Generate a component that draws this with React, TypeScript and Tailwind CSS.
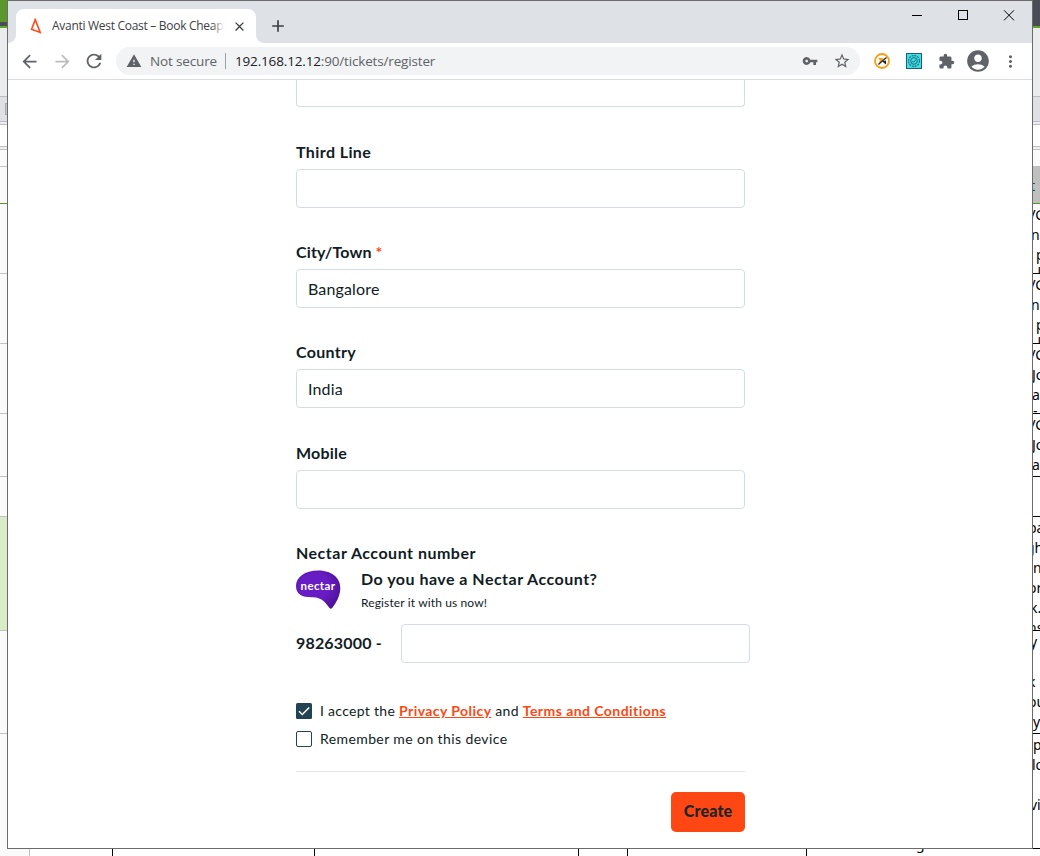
import React from "react";
import {
  MdAccountCircle,
  MdAdd,
  MdArrowBack,
  MdArrowForward,
  MdClose,
  MdExtension,
  MdMoreVert,
  MdRefresh,
  MdStarBorder,
  MdVpnKey,
  MdWarning,
} from "react-icons/md";

function LeftEdge() {
  return (
    <div className="flex w-[7px] shrink-0 flex-col overflow-hidden bg-[#fafafa]">
      <div className="h-[22px] bg-[#5b982b]" />
      <div className="h-1 bg-[#4a4d57]" />
      <div className="h-0.5 bg-[#5fa82c]" />
      <div className="h-[68px] bg-[#ebecee]" />
      <div className="flex h-[26px] items-center justify-end border-y border-[#bcbcc4] bg-[#dfe0e6]">
        <div className="h-3 w-0.5 border-y border-l border-[#a9a9ad] bg-[#c8c8cc]" />
      </div>
      <div className="h-0.5 bg-[#ececf0]" />
      <div className="h-[23px] border-y border-[#c0c0c4] bg-white" />
      <div className="h-0.5 bg-[#eeeeee]" />
      <div className="h-[18px] border-y border-[#c3c3c3]" />
      <div className="h-9" />
      <div className="h-px bg-[#5b982b]" />
      <div className="h-[70px] border-b border-[#c3c3c3]" />
      <div className="h-[70px] border-b border-[#c3c3c3]" />
      <div className="h-[70px] border-b border-[#c3c3c3]" />
      <div className="h-[63px] border-b border-[#c3c3c3]" />
      <div className="h-10 border-b border-[#c3c3c3]" />
      <div className="h-[114px] border-b border-[#c3c3c3] bg-[#d8edc6]" />
      <div className="h-[103px] border-b border-[#c3c3c3]" />
    </div>
  );
}

function Cell({ size, lines }: { size: string; lines: [string, string][] }) {
  return (
    <div className={`${size} overflow-hidden border-b border-black pt-px`}>
      {lines.map(([text, place], i) => (
        <div key={i} className={`h-5 leading-5 ${place}`}>
          {text}
        </div>
      ))}
    </div>
  );
}

function RightEdge() {
  return (
    <div className="flex w-[7px] shrink-0 flex-col overflow-hidden whitespace-nowrap bg-white font-['Noto_Sans',sans-serif] text-[14px] text-black">
      <div className="h-[26px] shrink-0 bg-[#4a4d57]" />
      <div className="h-0.5 shrink-0 bg-[#5fa82c]" />
      <div className="h-[68px] shrink-0 bg-[#ebecee]" />
      <div className="h-[26px] shrink-0 border-y border-[#bcbcc4] bg-[#dfe0e6]" />
      <div className="h-0.5 shrink-0 bg-[#ececf0]" />
      <div className="h-[23px] shrink-0 border-y border-[#c0c0c4]" />
      <div className="h-0.5 shrink-0 bg-[#eeeeee]" />
      <div className="h-[17px] shrink-0 border-t border-[#c3c3c3] bg-[#fafafa]" />
      <div className="h-[37px] shrink-0 bg-[#bfbfbf]">
        <div className="-ml-[3px] leading-[40px] text-[#17425c]">t</div>
      </div>
      <div className="h-px shrink-0 bg-[#5b982b]" />
      <Cell size="h-[70px] shrink-0" lines={[["VC", "-ml-1.5"], ["n", "-ml-0.5"], ["p", "ml-[3px]"], ["-l", "-mt-0.5"]]} />
      <Cell size="h-[70px] shrink-0" lines={[["VC", "-ml-1.5"], ["n", "-ml-0.5"], ["p", "ml-[3px]"], ["-l", "-mt-0.5"]]} />
      <Cell size="h-[70px] shrink-0" lines={[["VC", "-ml-1.5"], ["Jo", "-ml-px"], ["a", "-ml-px"], ["-", "-mt-1"]]} />
      <Cell size="h-[63px] shrink-0" lines={[["VC", "-ml-1.5"], ["Jo", "-ml-px"], ["a", "-ml-px"]]} />
      <Cell size="h-10 shrink-0" lines={[]} />
      <Cell
        size="h-[114px] shrink-0"
        lines={[["pa", "-ml-[5px]"], ["gh", "-ml-[7px]"], ["n", ""], ["or", "-ml-[5px]"], ["k.", "-ml-[3px]"], ["ns", "-ml-[5px]"]]}
      />
      <Cell
        size="h-[103px] shrink-0"
        lines={[["y", "-ml-[3px]"], ["", ""], ["k", "-ml-[5px]"], ["ou", "-ml-[5px]"], ["y", ""]]}
      />
      <Cell size="h-[115px] shrink-0" lines={[["p", ""], ["lo", "-ml-px"], ["", ""], ["vi", "-ml-[3px]"]]} />
    </div>
  );
}

function TabStrip() {
  return (
    <div className="flex h-[42px] bg-[#dee1e6]">
      <div className="flex w-2 items-end bg-white">
        <div className="h-full w-2 rounded-br-lg bg-[#dee1e6]" />
      </div>
      <div className="mt-2 flex h-[34px] w-60 items-center rounded-t-lg bg-white">
        <svg className="ml-3 h-4 w-4" viewBox="0 0 16 16" fill="none">
          <path d="M7.2 1.6 12.2 14.5 3.6 11.3Z" stroke="#ff4a1c" strokeWidth="1.6" />
        </svg>
        <div className="relative ml-2 w-[172px] overflow-hidden whitespace-nowrap font-['Open_Sans',sans-serif] text-[12px] leading-5 tracking-[-0.29px] text-[#3c4043]">
          Avanti West Coast – Book Cheap
          <div className="absolute inset-y-0 right-0 w-3 bg-linear-to-r from-transparent to-white" />
        </div>
        <MdClose className="ml-2 h-[15px] w-[15px] text-[#3c4043]" />
      </div>
      <div className="flex w-2 bg-white">
        <div className="h-full w-2 rounded-bl-lg bg-[#dee1e6]" />
      </div>
      <MdAdd className="ml-1 mt-[15px] h-5 w-5 text-[#3c4043]" />
      <svg className="ml-auto mr-[17px] mt-[9px] h-[11px] w-[103px]" viewBox="0 0 103 11" fill="none" stroke="#000">
        <path d="M0 5.5H10" />
        <rect x="46.5" y="0.5" width="9" height="9" />
        <path d="M92 .3 102 10.3M102 .3 92 10.3" />
      </svg>
    </div>
  );
}

function Toolbar() {
  return (
    <div className="flex h-[37px] items-center border-b border-[#dadce0] bg-white pl-[11px] font-['Open_Sans',sans-serif] text-[13.5px] text-[#5f6368]">
      <MdArrowBack className="h-[21px] w-[21px]" />
      <MdArrowForward className="ml-3 h-[21px] w-[21px] text-[#babcbe]" />
      <MdRefresh className="ml-2.5 h-[22px] w-[22px]" />
      <div className="ml-[11px] flex h-7 w-[744px] items-center rounded-full bg-[#f1f3f4]">
        <MdWarning className="ml-2.5 h-4 w-4" />
        <span className="ml-2 w-[67px] whitespace-nowrap tracking-[-0.15px]">Not secure</span>
        <div className="ml-2 mr-[9px] h-4 w-px bg-[#9aa0a6]" />
        <span className="whitespace-nowrap tracking-[-0.16px] text-[#202124]">
          192.168.12.12<span className="text-[#5f6368]">:90/tickets/register</span>
        </span>
        <MdVpnKey className="ml-auto h-4 w-4" />
        <MdStarBorder className="ml-[15px] mr-[9px] h-[18px] w-[18px]" />
      </div>
      <svg className="ml-3.5 h-4 w-4" viewBox="0 0 16 16" fill="none">
        <circle cx="8" cy="8" r="7" fill="#fff" stroke="#fb9d12" strokeWidth="1.8" />
        <path d="M4 5H9.5L8 8 4.5 10.5 6 7.5Z" fill="#fb9d12" />
        <path d="M12.5 4.5 8 8.3 4.5 11.5" stroke="#222" strokeWidth="1.2" />
        <path d="M8 8.3 12 7.5V11.5Z" fill="#222" />
      </svg>
      <svg className="ml-4 h-4 w-4" viewBox="0 0 16 16" fill="none">
        <rect x=".5" y=".5" width="15" height="15" fill="#43dde6" stroke="#17626d" />
        <circle cx="8" cy="8" r="5.4" stroke="#176a78" strokeWidth="1.1" strokeDasharray="2 .8" />
        <circle cx="8" cy="8" r="3.3" stroke="#176a78" />
        <path d="m6.3 8 1.2 1.3L10 6.5" stroke="#176a78" />
      </svg>
      <MdExtension className="ml-[15.5px] h-[17px] w-[17px]" />
      <MdAccountCircle className="ml-[10.5px] h-[26px] w-[26px]" />
      <MdMoreVert className="ml-[10px] h-[19px] w-[19px]" />
    </div>
  );
}

function Field({
  label,
  value,
  required,
  place,
}: {
  label: string;
  value?: string;
  required?: boolean;
  place: string;
}) {
  return (
    <label className={`block ${place}`}>
      <span className="block h-[22px] text-[16px] font-bold leading-[22px]">
        {label}
        {required && <span className="text-[#ff4713]"> *</span>}
      </span>
      <input
        className="mt-1.5 block h-[39px] w-full rounded border border-[#d3dde6] bg-white px-[11px] text-[16px] tracking-[0.15px] outline-none"
        defaultValue={value}
      />
    </label>
  );
}

function NectarLogo() {
  return (
    <svg className="h-[39px] w-[45px] shrink-0" viewBox="0 0 45 39">
      <defs>
        <radialGradient id="nectar" cx=".42" cy=".42" r=".65">
          <stop offset="0.5" stopColor="#681cc4" />
          <stop offset="1" stopColor="#4b1194" />
        </radialGradient>
      </defs>
      <path
        d="M0 16C0 7 9 .5 22 .5S44.3 7 44.3 18C44.3 26 40 33 36.2 38Q35 39.5 33.5 38C30 33.5 26.5 27.5 17 27.2C7 27.5 0 25 0 16Z"
        fill="url(#nectar)"
      />
      <text x="4.5" y="20" fill="#fff" fontFamily="Lato, sans-serif" fontWeight="700" fontSize="11.5" textLength="34.5">
        nectar
      </text>
    </svg>
  );
}

function RegisterForm() {
  return (
    <div className="ml-72 w-[449px] font-['Lato',sans-serif] text-[#111c24]">
      <div className="h-[27px] rounded-b border-x border-b border-[#d3dde6]" />
      <Field label="Third Line" place="mt-[34px] tracking-[0.4px]" />
      <Field label="City/Town" value="Bangalore" required place="mt-[33px] tracking-[0.12px]" />
      <Field label="Country" value="India" place="mt-[33px] tracking-[0.3px]" />
      <Field label="Mobile" place="mt-[34px] tracking-[0.2px]" />
      <div className="mt-[33px] h-[22px] text-[16px] font-bold leading-[22px] tracking-[0.5px]">
        Nectar Account number
      </div>
      <div className="mt-1.5 flex h-[39px]">
        <NectarLogo />
        <div className="ml-5 whitespace-nowrap">
          <div className="h-5 text-[16px] font-bold leading-[18px] tracking-[0.48px]">Do you have a Nectar Account?</div>
          <div className="mt-1 text-[12px] leading-[18px] tracking-[0.13px]">Register it with us now!</div>
        </div>
      </div>
      <div className="mt-[15px] flex h-[39px] items-center">
        <div className="mb-0.5 w-[105px] shrink-0 whitespace-nowrap text-[16px] font-bold tracking-[0.17px]">98263000 -</div>
        <input className="h-[39px] w-[349px] shrink-0 rounded border border-[#d3dde6] outline-none" />
      </div>
      <div className="mt-[38px] flex h-5 items-center whitespace-nowrap text-[14px] leading-[20px]">
        <svg className="mr-2 h-4 w-4" viewBox="0 0 16 16" fill="none">
          <rect width="16" height="16" rx="1.5" fill="#214353" />
          <path d="m3 8.3 3.3 3.2L13.2 4.5" stroke="#fff" strokeWidth="1.5" />
        </svg>
        <p className="h-5 tracking-[0.3px]">
          I accept the{" "}
          <a className="font-bold tracking-[0.43px] text-[#ff4713] underline">Privacy Policy</a> and{" "}
          <a className="font-bold tracking-[0.45px] text-[#ff4713] underline">Terms and Conditions</a>
        </p>
      </div>
      <div className="mt-2 flex h-5 items-center whitespace-nowrap text-[14px] leading-[20px]">
        <div className="mr-2 h-4 w-4 rounded-xs border border-[#214353]" />
        <p className="h-5 tracking-[0.4px]">Remember me on this device</p>
      </div>
      <div className="mt-[22px] h-px bg-[#e4e6e8]" />
      <div className="mt-5 flex justify-end">
        <button className="h-10 w-[74px] rounded-[5px] bg-[#ff4713] pb-0.5 text-[16px] font-black tracking-[0.15px] text-[#20242b]">
          Create
        </button>
      </div>
    </div>
  );
}

export default function App() {
  return (
    <div className="flex h-[856px] w-[1040px] overflow-hidden">
      <LeftEdge />
      <div className="flex w-[1026px] shrink-0 flex-col">
        <div className="h-[849px] shrink-0 overflow-hidden border border-[#6b6b6b] bg-white">
          <TabStrip />
          <Toolbar />
          <RegisterForm />
        </div>
        <div className="flex h-[7px] overflow-hidden bg-white">
          <div className="w-[23px] shrink-0 border-r border-[#c3c3c3] bg-[#fafafa]" />
          <div className="w-[83px] shrink-0 border-r border-black" />
          <div className="w-[202px] shrink-0 border-r border-black" />
          <div className="w-[264px] shrink-0 border-r border-black" />
          <div className="w-[49px] shrink-0 border-r border-black" />
          <div className="w-[179px] shrink-0 border-r border-black" />
          <div className="-mt-[15px] ml-[3px] whitespace-nowrap font-['Noto_Sans',sans-serif] text-[14px] leading-5 tracking-[-0.3px] text-black">
            rewards out along with checkbox
          </div>
        </div>
      </div>
      <RightEdge />
    </div>
  );
}
